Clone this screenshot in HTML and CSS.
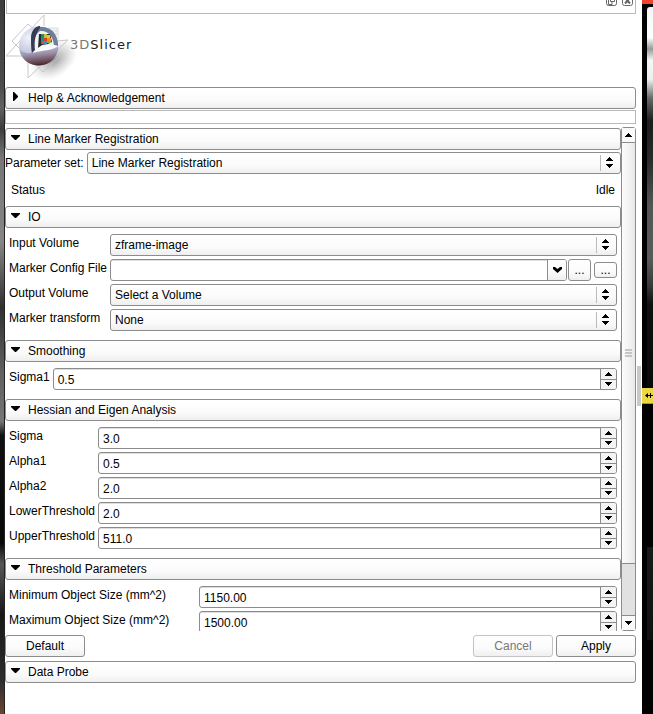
FILE: index.html
```html
<!DOCTYPE html>
<html lang="en">
<head>
<meta charset="utf-8">
<title>3DSlicer - Line Marker Registration</title>
<link rel="stylesheet" href="styles.css">
</head>
<body>
<svg class="defs" aria-hidden="true">
  <symbol id="up" viewBox="0 0 7 4"><path d="M3 0h1v1h1v1h1v1h1v1H0V3h1V2h1V1h1z"/></symbol>
  <symbol id="down" viewBox="0 0 7 4"><path d="M0 0h7v1H6v1H5v1H4v1H3V3H2V2H1V1H0z"/></symbol>
  <symbol id="updown" viewBox="0 0 7 11"><path d="M3 0h1v1h1v1h1v1h1v1H0V3h1V2h1V1h1zM0 7h7v1H6v1H5v1H4v1H3v-1H2V9H1V8H0z"/></symbol>
  <symbol id="open" viewBox="0 0 9 5"><path d="M0 0h9v1L5 5H4L0 1z"/></symbol>
  <symbol id="closed" viewBox="0 0 5 9"><path d="M0 0h1l4 4v1L1 9H0z"/></symbol>
</svg>

<div class="view view-left"></div>

<main class="panel">
  <div class="dock-title">
    <button class="dock-button" aria-label="Float panel"><svg width="11" height="11" viewBox="0 0 11 11"><rect x=".5" y=".5" width="10" height="10" rx="2"/><path d="M4.500 2.500h4v4h-4zM6 7v2.500H2.500V4.500H4"/></svg></button>
    <button class="dock-button" aria-label="Close panel"><svg width="11" height="11" viewBox="0 0 11 11"><rect x=".5" y=".5" width="10" height="10" rx="2"/><path class="heavy" d="M3 3l5 5.500M8 3L3 8.500"/></svg></button>
  </div>

  <header class="brand">
    <svg class="logo" width="80" height="68" viewBox="5 14 80 68" aria-hidden="true">
      <defs>
        <radialGradient id="ball" cx=".25" cy=".3" r=".9"><stop offset="0" stop-color="#f1f3fc"/><stop offset=".5" stop-color="#b9bfd8"/><stop offset=".85" stop-color="#7c7c98"/><stop offset="1" stop-color="#5a5068"/></radialGradient>
        <linearGradient id="bowl" x1=".3" y1="0" x2=".5" y2="1"><stop offset="0" stop-color="#c6cbe1"/><stop offset=".45" stop-color="#9a92aa"/><stop offset=".8" stop-color="#6c4c58"/><stop offset="1" stop-color="#42262c"/></linearGradient>
        <radialGradient id="shade"><stop offset="0" stop-color="#777" stop-opacity=".75"/><stop offset="1" stop-color="#aaa" stop-opacity="0"/></radialGradient>
      </defs>
      <ellipse cx="54" cy="60" rx="26" ry="17" fill="url(#shade)" transform="rotate(-35 54 60)"/>
      <g class="planes">
        <path d="M44 15L6 56H27M44 15V26M28 78V62M28 78L68 40 57 41M12 41L28 24 37 32M12 41L43 72 60 56 52 48"/>
        <path class="mesh" d="M48 28h10v13M50 28v5M53 28v6M56 28v10M48 31h10M50 34h8"/>
      </g>
      <circle cx="38.500" cy="46" r="19.500" fill="url(#ball)"/>
      <path d="M40 27C51 26 58 34 58 46L32 53C31 44 33 32 40 27z" fill="#6d7f9b"/>
      <path d="M40 31C48 30 54 37 54 47L32 53C33 44 34 35 40 31z" fill="#f0f2f4"/>
      <path d="M39 34h11l2 8-4 2-6 1-4 3z" fill="#222b2c"/>
      <g>
        <path fill="#358556" d="M41 34h3v4h-3z"/><path fill="#b4c83e" d="M44 34h3v4h-3z"/><path fill="#edc52c" d="M47 35h3v3h-3z"/>
        <path fill="#2686aa" d="M41 38h3v3h-3z"/><path fill="#df3f21" d="M44 38h3v3h-3z"/><path fill="#f28926" d="M47 38h4v3h-4z"/>
        <path fill="#d7502a" d="M41 41h3v3h-3z"/><path fill="#249dba" d="M44 41h3v3h-3z"/><path fill="#83b44b" d="M47 41h4v2h-4z"/>
      </g>
      <path d="M19.500 50C26 54 31 54 35 51C43 46 51 44 58 46C58 57 50 65.500 39 65.500C29 65.500 21 59 19.500 50z" fill="url(#bowl)"/>
      <path d="M32 53C38 46 50 43 58 46C55 50 44 50 32 53z" fill="#fafaff"/>
      <path d="M40 26C35 26 31 31 31 38C31 44 31 48 32 53L35 50C34 42 35 34 40 28z" fill="#373c55"/>
    </svg>
    <span class="wordmark"><span class="wordmark-light">3D</span>Slicer</span>
  </header>

  <button class="section help"><svg class="closed"><use href="#closed"/></svg>Help &amp; Acknowledgement</button>
  <div class="empty-bar"></div>

  <div class="scroll-area">
    <div class="content">
      <button class="section"><svg class="open"><use href="#open"/></svg>Line Marker Registration</button>
      <div class="parameter-set">
        <label for="pset">Parameter set:</label>
        <div class="combo"><select id="pset"><option>Line Marker Registration</option></select><svg class="updown"><use href="#updown"/></svg></div>
      </div>
      <div class="status"><span>Status</span><span>Idle</span></div>

      <button class="section"><svg class="open"><use href="#open"/></svg>IO</button>
      <div class="form">
        <label for="involume">Input Volume</label>
        <div class="combo"><select id="involume"><option>zframe-image</option></select><svg class="updown"><use href="#updown"/></svg></div>
        <label for="config">Marker Config File</label>
        <div class="file-row">
          <div class="path"><input id="config" type="text"><button aria-label="Recent files"><svg width="9" height="6" viewBox="0 0 9 6"><path d="M0 0h2l2.500 2L7 0h2v2L4.500 6 0 2z"/></svg></button></div>
          <button class="browse">...</button>
          <button class="browse small">...</button>
        </div>
        <label for="outvolume">Output Volume</label>
        <div class="combo"><select id="outvolume"><option>Select a Volume</option></select><svg class="updown"><use href="#updown"/></svg></div>
        <label for="transform">Marker transform</label>
        <div class="combo"><select id="transform"><option>None</option></select><svg class="updown"><use href="#updown"/></svg></div>
      </div>

      <button class="section"><svg class="open"><use href="#open"/></svg>Smoothing</button>
      <div class="form">
        <label for="sigma1">Sigma1</label>
        <div class="spin"><input id="sigma1" type="text" value="0.5"><div class="steps"><button aria-label="Increase"><svg><use href="#up"/></svg></button><button aria-label="Decrease"><svg><use href="#down"/></svg></button></div></div>
      </div>

      <button class="section"><svg class="open"><use href="#open"/></svg>Hessian and Eigen Analysis</button>
      <div class="form">
        <label for="sigma">Sigma</label>
        <div class="spin"><input id="sigma" type="text" value="3.0"><div class="steps"><button aria-label="Increase"><svg><use href="#up"/></svg></button><button aria-label="Decrease"><svg><use href="#down"/></svg></button></div></div>
        <label for="alpha1">Alpha1</label>
        <div class="spin"><input id="alpha1" type="text" value="0.5"><div class="steps"><button aria-label="Increase"><svg><use href="#up"/></svg></button><button aria-label="Decrease"><svg><use href="#down"/></svg></button></div></div>
        <label for="alpha2">Alpha2</label>
        <div class="spin"><input id="alpha2" type="text" value="2.0"><div class="steps"><button aria-label="Increase"><svg><use href="#up"/></svg></button><button aria-label="Decrease"><svg><use href="#down"/></svg></button></div></div>
        <label for="lower">LowerThreshold</label>
        <div class="spin"><input id="lower" type="text" value="2.0"><div class="steps"><button aria-label="Increase"><svg><use href="#up"/></svg></button><button aria-label="Decrease"><svg><use href="#down"/></svg></button></div></div>
        <label for="upper">UpperThreshold</label>
        <div class="spin"><input id="upper" type="text" value="511.0"><div class="steps"><button aria-label="Increase"><svg><use href="#up"/></svg></button><button aria-label="Decrease"><svg><use href="#down"/></svg></button></div></div>
      </div>

      <button class="section"><svg class="open"><use href="#open"/></svg>Threshold Parameters</button>
      <div class="form wide-labels">
        <label for="minsize">Minimum Object Size (mm^2)</label>
        <div class="spin"><input id="minsize" type="text" value="1150.00"><div class="steps"><button aria-label="Increase"><svg><use href="#up"/></svg></button><button aria-label="Decrease"><svg><use href="#down"/></svg></button></div></div>
        <label for="maxsize">Maximum Object Size (mm^2)</label>
        <div class="spin"><input id="maxsize" type="text" value="1500.00"><div class="steps"><button aria-label="Increase"><svg><use href="#up"/></svg></button><button aria-label="Decrease"><svg><use href="#down"/></svg></button></div></div>
      </div>
    </div>
    <div class="scrollbar">
      <button aria-label="Scroll up"><svg><use href="#up"/></svg></button>
      <div class="thumb"><i></i><i></i><i></i></div>
      <div class="trough"></div>
      <button aria-label="Scroll down"><svg><use href="#down"/></svg></button>
    </div>
  </div>

  <div class="actions">
    <button>Default</button>
    <button class="cancel" disabled>Cancel</button>
    <button>Apply</button>
  </div>
  <button class="section probe"><svg class="open"><use href="#open"/></svg>Data Probe</button>
</main>

<div class="splitter"><div class="grip"></div></div>

<div class="view view-right">
  <div class="red-bar"></div>
  <div class="slice"></div>
  <div class="yellow-bar"><svg width="8" height="7" viewBox="0 0 8 7"><path d="M0 3.500L3 1v2h2V1h1v2h2v1H6v2H5V4H3v2z"/></svg></div>
  <div class="slice-dark"></div>
</div>
</body>
</html>
```

FILE: styles.css
```css
* { box-sizing: border-box; }

:root {
  --line: #8c8c8c;
  --face: linear-gradient(#fff, #fbfbfb 60%, #efefef);
}

body {
  margin: 0;
  height: 100vh;
  display: flex;
  overflow: hidden;
  background: #fff;
  color: #000;
  font: 12px/16px "Liberation Sans", Arial, sans-serif;
}

button, input, select { font: inherit; color: inherit; margin: 0; padding: 0; }
button { display: flex; align-items: center; justify-content: center; border: 0; background: none; }
svg { display: block; }
.defs { position: absolute; width: 0; height: 0; }

/* Image views on both sides of the panel */
.view-left {
  flex: 0 0 5px;
  border-right: 1px solid #222;
  background: linear-gradient(#3c3c3c, #4c4c4c 12%, #626262 15%, #3c3c3c 18%, #767676 22%, #858585 34%, #303030 43%, #606060 52%, #757575 59%, #111 61%, #080808 76%, #555 79%, #181818 86%, #2b2b2b 95%, #6a4632);
}
.view-right { flex: 0 0 11px; display: flex; flex-direction: column; background: #000; }
.red-bar { height: 4px; background: #f34430; }
.slice {
  flex: 383;
  margin: 3px 0 0 5px;
  border-radius: 3px 0 0;
  background: linear-gradient(#f5f5f5, #fff 8%, #999 11%, #f5f5f5 14%, #eee 19%, #666 24%, #1c1c1c 30%, #2a2a2a 40%, #555 52%, #5a5a5a 66%, #3a3a3a 73%, #101010 78%, #0a0a0a);
}
.yellow-bar { flex: 0 0 16px; display: flex; align-items: center; justify-content: flex-end; background: #ecd745; border-bottom: 1px solid #a9982c; }
.slice-dark { flex: 311; margin-left: 5px; background: linear-gradient(#000 46%, #1a1a1a 46%, #111 76%, #000 76%); }

.splitter { flex: 0 0 6px; display: flex; flex-direction: column; justify-content: center; padding: 58px 1px 0; }
.grip { height: 40px; width: 4px; background: #c9c9c9; }

/* Module panel */
.panel { flex: 1; min-width: 0; display: flex; flex-direction: column; padding-bottom: 31px; }

.dock-title {
  flex: 0 0 14px;
  display: flex;
  align-items: flex-end;
  justify-content: flex-end;
  gap: 5px;
  margin-left: 1px;
  padding: 0 2px 7px 0;
  border: solid #b9b9b9;
  border-width: 0 1px 1px;
  overflow: hidden;
}
.dock-button svg { fill: none; stroke: #666; }
.dock-button .heavy { stroke-width: 2; }

.brand { flex: 0 0 73px; display: flex; }
.logo { flex: none; overflow: visible; }
.planes path { fill: none; stroke: #c8c8c8; stroke-width: 1; }
.planes .mesh { stroke: #dcdcdc; }
.wordmark { margin: 23px 0 0 -15px; font: 13px/16px "DejaVu Sans", Verdana, sans-serif; letter-spacing: 1px; color: #222; }
.wordmark-light { color: #777; }

.section {
  flex: none;
  width: 100%;
  height: 22px;
  gap: 8px;
  justify-content: flex-start;
  padding-left: 5px;
  border: 1px solid var(--line);
  border-radius: 3px;
  background: var(--face);
}
.section svg { margin-bottom: 3px; }
.section .open { width: 9px; height: 5px; }
.section .closed { width: 5px; height: 9px; margin: 0 2px 3px; }
.empty-bar { flex: 0 0 14px; margin: 1px 0 3px; border: 1px solid #b9b9b9; }

.scroll-area { flex: 1; min-height: 0; display: flex; overflow: hidden; }
.content { flex: 1; min-width: 0; padding-top: 1px; overflow: hidden; }

.parameter-set { display: flex; align-items: center; gap: 3px; margin-top: 2px; }
.parameter-set .combo { flex: 1; }
.status { display: flex; align-items: center; justify-content: space-between; height: 32px; padding: 0 6px; }

.form {
  display: grid;
  grid-template-columns: auto minmax(0, 1fr);
  gap: 3px;
  padding: 6px 4px 9px;
}
.form label { padding-top: 1px; }
.wide-labels { grid-template-columns: 187px minmax(0, 1fr); }

.combo { position: relative; height: 22px; }
.combo select {
  appearance: none;
  width: 100%;
  height: 22px;
  padding: 0 24px 0 4px;
  border: 1px solid var(--line);
  border-radius: 3px;
  background: var(--face);
}
.combo .updown {
  position: absolute;
  top: 3px;
  right: 4px;
  width: 17px;
  height: 16px;
  padding: 2px 4px 3px 5px;
  border-left: 1px solid #bbb;
}

.spin, .path {
  display: flex;
  height: 22px;
  border: 1px solid var(--line);
  border-radius: 3px;
  background: #fff;
  box-shadow: inset 0 1px #ddd;
  overflow: hidden;
}
.spin input, .path input { flex: 1; min-width: 0; padding: 2px 4px 0; border: 0; background: none; outline: 0; }
.steps { flex: 0 0 16px; display: flex; flex-direction: column; border-left: 1px solid var(--line); background: #f4f4f4; }
.steps button { flex: 1; }
.steps button + button { border-top: 1px solid var(--line); }
.steps svg, .scrollbar svg { width: 7px; height: 4px; }

.file-row { display: flex; align-items: center; }
.path { flex: 1; min-width: 0; }
.path button { width: 19px; border-left: 1px solid var(--line); background: var(--face); }
.browse { width: 23px; height: 22px; margin-left: 1px; border: 1px solid var(--line); border-radius: 3px; background: var(--face); }
.browse.small { height: 16px; margin-left: 3px; }

.scrollbar { flex: 0 0 15px; display: flex; flex-direction: column; border: 1px solid var(--line); border-radius: 3px; background: #e1e1e1; }
.scrollbar button { flex: 0 0 14px; background: #fafafa; }
.thumb {
  flex: 423;
  display: flex;
  flex-direction: column;
  align-items: center;
  justify-content: center;
  gap: 1px;
  border: solid var(--line);
  border-width: 1px 0;
  background: linear-gradient(90deg, #fcfcfc, #e9e9e9);
}
.thumb i { width: 7px; height: 2px; background: #c6c6c6; }
.trough { flex: 51; border-bottom: 1px solid var(--line); }

.actions { display: flex; gap: 3px; padding: 4px 0; }
.actions button { width: 80px; height: 22px; border: 1px solid var(--line); border-radius: 3px; background: var(--face); }
.actions .cancel { margin-left: auto; color: #777; border-color: #c4c4c4; }
```
